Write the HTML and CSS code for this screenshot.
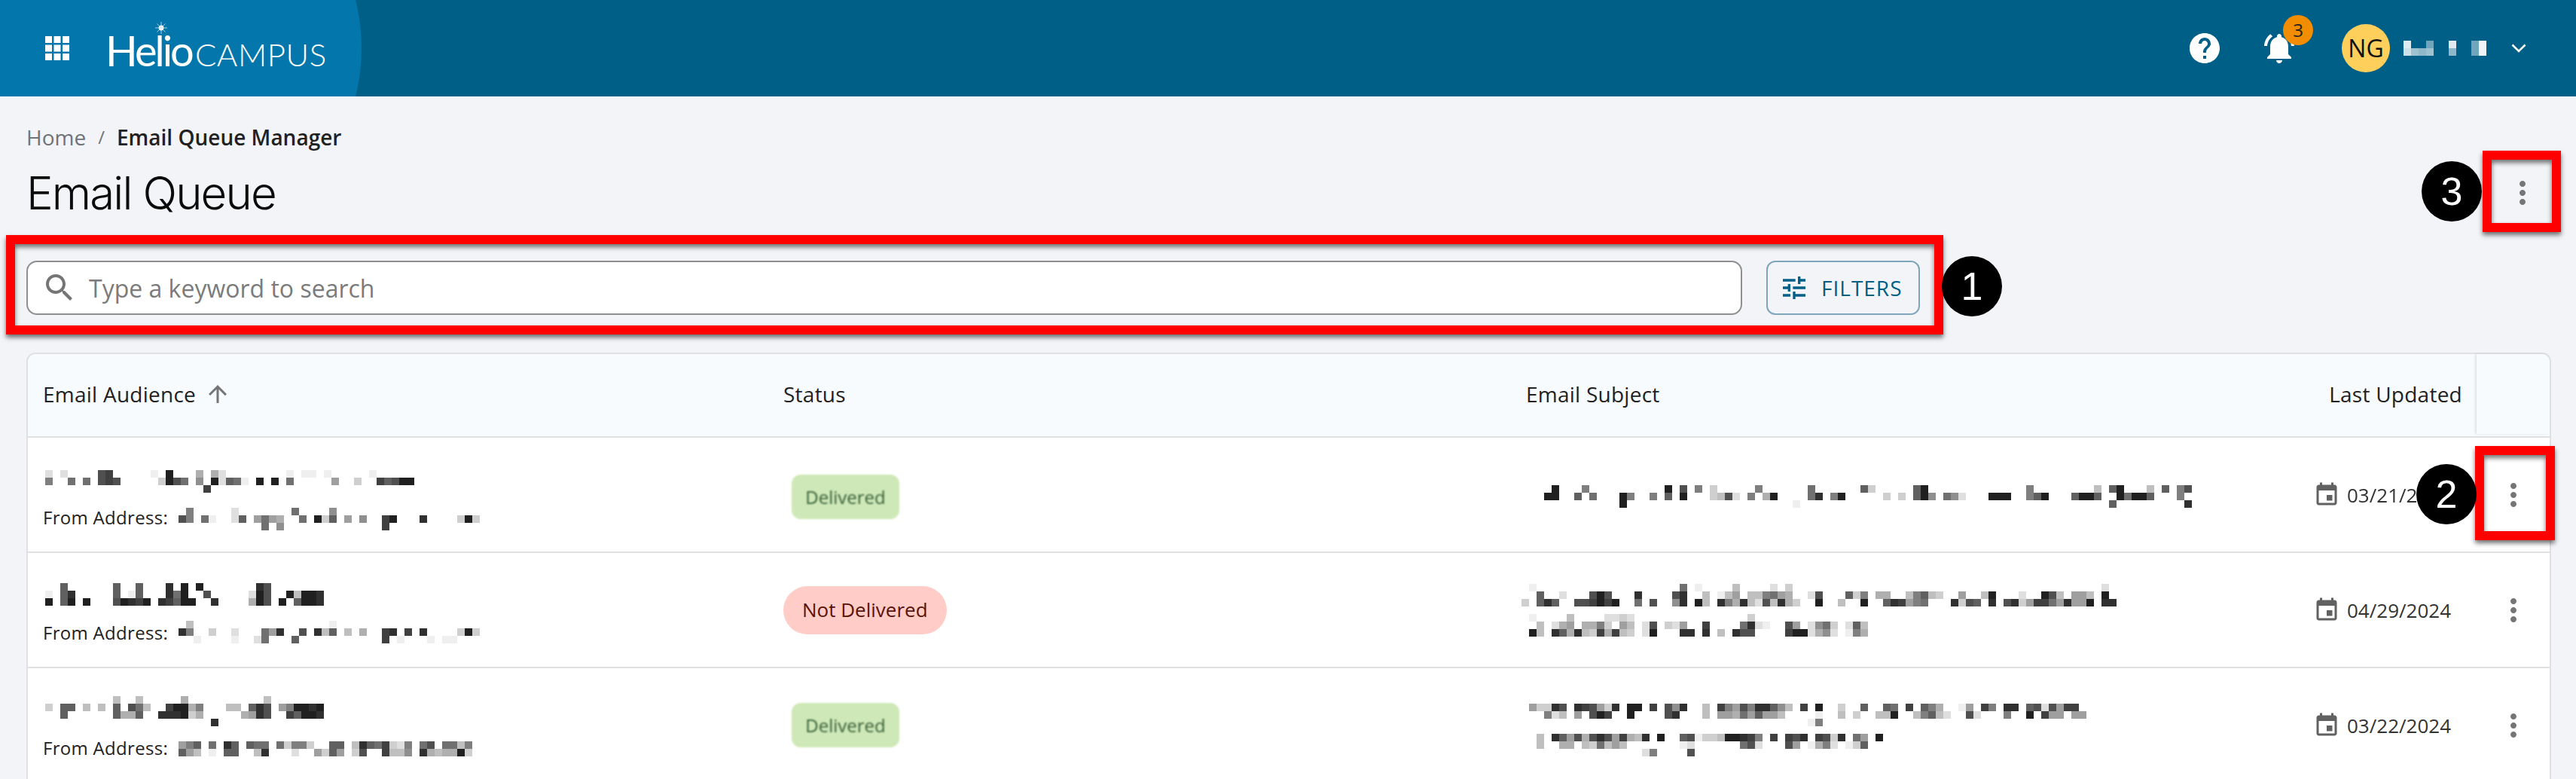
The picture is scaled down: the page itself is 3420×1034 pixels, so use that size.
FILE: index.html
```html
<!DOCTYPE html>
<html lang="en">
<head>
    <meta charset="UTF-8">
    <title>Email Queue</title>
    <link rel="stylesheet" href="styles.css">
</head>
<body>
    <header class="topbar">
        <div class="brand">
            <svg class="apps-icon" viewBox="0 0 32 32">
                <path fill="#fff" d="M0 0h9v9H0zM11.5 0h9v9h-9zM23 0h9v9h-9zM0 11.5h9v9H0zM11.5 11.5h9v9h-9zM23 11.5h9v9h-9zM0 23h9v9H0zM11.5 23h9v9h-9zM23 23h9v9h-9z"/>
            </svg>
            <div class="logo">
                <span class="logo-helio">Helio</span><span class="logo-campus">CAMPUS</span>
                <svg class="logo-spark" viewBox="0 0 16 16">
                    <circle cx="8" cy="8" r="3.4" fill="#fff"/>
                    <path stroke="#cfe6f2" stroke-width="0.8" d="M8 0v16M0 8h16M2.5 2.5l11 11M13.5 2.5l-11 11"/>
                </svg>
            </div>
        </div>
        <div class="topbar-actions">
            <svg class="icon-48 help-icon" viewBox="0 0 24 24"><path fill="#fff" d="M12 2C6.48 2 2 6.48 2 12s4.48 10 10 10 10-4.48 10-10S17.52 2 12 2zm1 17h-2v-2h2v2zm2.07-7.75l-.9.92C13.45 12.9 13 13.5 13 15h-2v-.5c0-1.1.45-2.1 1.17-2.83l1.24-1.26c.37-.36.59-.86.59-1.41 0-1.1-.9-2-2-2s-2 .9-2 2H8c0-2.21 1.79-4 4-4s4 1.79 4 4c0 .88-.36 1.68-.93 2.25z"/></svg>
            <div class="bell">
                <svg class="icon-48" viewBox="0 0 24 24"><path fill="#fff" d="M7.58 4.08L6.15 2.65C3.75 4.48 2.17 7.3 2.03 10.5h2c.15-2.65 1.51-4.97 3.55-6.42zm12.39 6.42h2c-.15-3.2-1.73-6.02-4.12-7.85l-1.42 1.43c2.02 1.45 3.39 3.77 3.54 6.42zM18 11c0-3.07-1.64-5.64-4.5-6.32V4c0-.83-.67-1.5-1.5-1.5s-1.5.67-1.5 1.5v.68C7.63 5.36 6 7.92 6 11v5l-2 2v1h16v-1l-2-2v-5zm-6 11c.14 0 .27-.01.4-.04.65-.14 1.18-.58 1.44-1.18.1-.24.15-.5.15-.78h-4c.01 1.1.9 2 2.01 2z"/></svg>
                <span class="bell-badge">3</span>
            </div>
            <div class="avatar">NG</div>
            <canvas class="pixels" data-ink="#fff" data-rows="0:2 3:9 6:2 9:9 10:1|0:3 1:6 2:7 3:6 6:7 9:9 10:1"></canvas>
            <svg class="chevron" viewBox="0 0 20 12"><path fill="none" stroke="#fff" stroke-width="2.6" d="M1.5 1.5L10 10l8.5-8.5"/></svg>
        </div>
    </header>

    <main class="page">
        <nav class="breadcrumb">
            <span class="crumb-home">Home</span>
            <span class="crumb-sep">/</span>
            <span class="crumb-current">Email Queue Manager</span>
        </nav>

        <div class="title-row">
            <h1>Email Queue</h1>
            <svg class="icon-48 kebab page-kebab" viewBox="0 0 24 24"><path d="M12 8c1.1 0 2-.9 2-2s-.9-2-2-2-2 .9-2 2 .9 2 2 2zm0 2c-1.100 0-2 .9-2 2s.9 2 2 2 2-.9 2-2-.9-2-2-2zm0 6c-1.100 0-2 .9-2 2s.9 2 2 2 2-.9 2-2-.9-2-2-2z"/></svg>
        </div>

        <div class="search-row">
            <label class="search-box">
                <svg class="search-icon" viewBox="0 0 24 24"><path d="M15.500 14h-.79l-.28-.27C15.410 12.590 16 11.110 16 9.500 16 5.910 13.090 3 9.500 3S3 5.910 3 9.500 5.910 16 9.500 16c1.610 0 3.090-.59 4.230-1.570l.27.28v.79l5 4.990L20.490 19l-4.990-5zm-6 0C7.010 14 5 11.990 5 9.500S7.010 5 9.500 5 14 7.010 14 9.500 11.990 14 9.500 14z"/></svg>
                <input type="text" placeholder="Type a keyword to search">
            </label>
            <button class="filters-btn">
                <svg class="tune-icon" viewBox="0 0 24 24"><path d="M3 17v2h6v-2H3zM3 5v2h10V5H3zm10 16v-2h8v-2h-8v-2h-2v6h2zM7 9v2H3v2h4v2h2V9H7zm14 4v-2H11v2h10zm-6-4h2V7h4V5h-4V3h-2v6z"/></svg>
                FILTERS
            </button>
        </div>

        <section class="queue-table">
            <div class="row head">
                <div class="cell cell-audience head-sort">
                    Email Audience
                    <svg class="sort-icon" viewBox="0 0 24 24"><path d="M4 12l1.410 1.410L11 7.830V20h2V7.830l5.580 5.590L20 12l-8-8-8 8z"/></svg>
                </div>
                <div class="cell cell-status">Status</div>
                <div class="cell cell-subject head-subject">Email Subject</div>
                <div class="cell cell-updated">Last Updated</div>
                <div class="cell cell-actions head-actions"></div>
            </div>

            <div class="row">
                <div class="cell cell-audience">
                    <div class="audience-name">
                        <canvas class="pixels nudge-10" data-rows="0:e 2:e 7:5 8:4 14:f 16:2 20:b 22:b 23:e 32:f 34:f 35:f 37:f 43:f|0:8 3:7 5:7 7:5 8:4 9:5 15:d 16:2 17:5 18:7 20:9 22:2 23:e 24:6 25:7 26:f 28:2 30:2 32:7 38:a 41:d 44:4 45:6 46:5 47:2 48:2|21:4"></canvas>
                    </div>
                    <div class="audience-from">
                        <span>From Address:</span>
                        <canvas class="pixels nudge-6" data-rows="1:8 7:e 15:7 20:9|0:5 1:8 3:7 4:f 7:e 8:6 10:a 11:7 12:a 13:b 16:7 18:2 19:d 20:6 22:a 24:9 27:4 28:2 32:3 37:d 38:2 39:d|11:7 13:9 27:4"></canvas>
                    </div>
                </div>
                <div class="cell cell-status"><span class="chip chip-ok chip-low">Delivered</span></div>
                <div class="cell cell-subject">
                    <canvas class="pixels nudge-5" data-rows="4:2 8:8 19:2 21:5 23:8 25:d 31:8 38:7 45:6 46:d 52:6 53:2 67:8 76:c 78:6 79:2 83:c 85:6 87:8 88:5|3:2 4:2 7:6 9:7 13:2 14:8 17:8 19:6 21:2 25:d 26:c 27:5 28:e 30:8 32:b 33:2 38:7 39:3 41:8 42:2 48:d 50:d 52:6 53:2 54:9 56:7 57:9 58:e 62:2 63:2 64:2 67:8 68:6 69:2 73:6 74:2 75:2 76:6 79:2 80:7 81:2 82:2 83:6 87:8|13:2 36:f 78:6 88:3"></canvas>
                </div>
                <div class="cell cell-updated cell-date">
                    <svg class="date-icon" viewBox="0 0 24 24"><path d="M17 12h-5v5h5v-5zM16 1v2H8V1H6v2H5c-1.110 0-1.990.9-1.990 2L3 19c0 1.100.89 2 2 2h14c1.100 0 2-.9 2-2V5c0-1.100-.9-2-2-2h-1V1h-2zm3 18H5V8h14v11z"/></svg>
                    <span class="date-text">03/21/2024</span>
                </div>
                <div class="cell cell-actions">
                    <svg class="icon-48 kebab" viewBox="0 0 24 24"><path d="M12 8c1.100 0 2-.9 2-2s-.9-2-2-2-2 .9-2 2 .9 2 2 2zm0 2c-1.100 0-2 .9-2 2s.9 2 2 2 2-.9 2-2-.9-2-2-2zm0 6c-1.100 0-2 .9-2 2s.9 2 2 2 2-.9 2-2-.9-2-2-2z"/></svg>
                </div>
            </div>

            <div class="row">
                <div class="cell cell-audience">
                    <div class="audience-name">
                        <canvas class="pixels nudge-7" data-rows="2:6 9:6 12:6 16:3 18:2 20:2 28:3 29:5|0:f 2:6 3:3 9:6 11:f 12:6 16:3 17:7 18:2 21:5 27:e 28:2 29:5 32:2 33:c 34:2 35:2 36:3|0:2 2:6 3:2 5:2 9:5 10:2 11:3 12:4 13:2 15:3 16:4 17:6 18:2 19:2 22:3 27:b 28:2 29:5 31:2 33:6 34:2 35:2 36:3"></canvas>
                    </div>
                    <div class="audience-from">
                        <span>From Address:</span>
                        <canvas class="pixels" data-rows="1:c 20:f|0:3 1:8 4:d 7:e 11:7 12:a 13:3 16:5 18:3 19:c 20:6 22:c 24:b 27:4 28:3 30:4 32:3 37:d 38:2 39:d|2:f 7:f 10:e 11:7 15:6 27:4 29:f 33:f 35:f 36:f"></canvas>
                    </div>
                </div>
                <div class="cell cell-status"><span class="chip chip-bad">Not Delivered</span></div>
                <div class="cell cell-subject">
                    <div class="subject-lines">
                        <canvas class="pixels" data-rows="1:f 21:7 23:f 28:c 33:e 35:d 77:e|2:6 5:e 9:5 10:2 11:5 15:3 20:5 21:3 24:c 26:f 27:c 28:a 30:c 31:c 32:8 33:7 34:a 35:b 38:e 39:5 43:6 44:d 45:8 47:b 48:b 51:c 52:8 53:6 54:c 55:d 58:a 61:c 62:2 66:e 69:2 70:5 71:c 73:a 74:a 75:c 77:2|0:d 2:6 3:3 4:6 7:5 8:5 9:4 10:2 11:4 12:2 15:7 17:5 20:9 21:3 23:2 24:c 26:3 27:8 28:b 29:3 30:c 31:e 32:5 33:c 34:3 35:b 36:d 39:2 42:c 45:2 48:6 49:3 50:4 51:a 52:8 53:7 57:3 58:d 59:5 60:6 62:3 64:5 65:3 66:d 67:a 68:4 69:4 70:7 71:a 72:3 73:a 74:a 75:2 77:3 78:3"></canvas>
                        <canvas class="pixels" data-rows="1:f 6:c 11:e 12:e 13:d 14:e 30:d|2:c 4:e 5:b 6:a 8:b 9:b 10:8 11:d 13:a 14:c 16:e 17:5 19:d 20:e 21:a 24:4 29:7 30:3 31:e 32:f 35:5 36:a 38:e 39:9 40:7 41:d 43:e 44:6 45:c|1:2 2:c 4:3 5:6 6:b 7:3 8:c 9:d 10:4 11:b 12:4 13:c 14:d 16:e 17:2 21:3 22:3 24:3 26:c 28:3 29:5 30:5 35:4 36:2 37:2 38:e 39:b 40:9 41:e 43:f 44:8 45:b"></canvas>
                    </div>
                </div>
                <div class="cell cell-updated cell-date">
                    <svg class="date-icon" viewBox="0 0 24 24"><path d="M17 12h-5v5h5v-5zM16 1v2H8V1H6v2H5c-1.110 0-1.990.9-1.990 2L3 19c0 1.100.89 2 2 2h14c1.100 0 2-.9 2-2V5c0-1.100-.9-2-2-2h-1V1h-2zm3 18H5V8h14v11z"/></svg>
                    <span class="date-text">04/29/2024</span>
                </div>
                <div class="cell cell-actions">
                    <svg class="icon-48 kebab" viewBox="0 0 24 24"><path d="M12 8c1.100 0 2-.9 2-2s-.9-2-2-2-2 .9-2 2 .9 2 2 2zm0 2c-1.100 0-2 .9-2 2s.9 2 2 2 2-.9 2-2-.9-2-2-2zm0 6c-1.100 0-2 .9-2 2s.9 2 2 2 2-.9 2-2-.9-2-2-2z"/></svg>
                </div>
            </div>

            <div class="row">
                <div class="cell cell-audience">
                    <div class="audience-name">
                        <canvas class="pixels nudge-4" data-rows="9:c 12:c 18:b 29:c|0:d 2:6 3:6 5:c 7:c 9:6 11:5 12:7 13:c 16:4 17:2 18:2 19:b 20:8 24:c 25:c 27:6 28:3 29:5 31:a 32:8 33:2 34:2 35:3 36:2|2:6 9:6 10:b 11:b 12:6 15:3 16:3 17:3 18:2 19:d 20:b 26:b 27:a 28:3 29:5 32:4 33:6 34:2 35:2 36:3|22:3"></canvas>
                    </div>
                    <div class="audience-from">
                        <span>From Address:</span>
                        <canvas class="pixels nudge-4" data-rows="0:a 1:8 2:6 4:7 6:3 7:6 9:6 10:7 11:7 13:7 14:d 15:8 16:8 17:d 20:6 21:6 23:c 24:3 25:6 26:7 27:4 28:d 29:e 30:8 32:7 33:5 35:7 36:7 37:c 38:8|0:6 1:a 2:c 4:f 6:6 7:6 10:c 11:3 15:e 18:a 19:d 20:6 21:a 23:d 24:5 27:4 28:c 29:c 30:9 32:3 33:b 34:c 35:b 36:b 37:2 38:d"></canvas>
                    </div>
                </div>
                <div class="cell cell-status"><span class="chip chip-ok">Delivered</span></div>
                <div class="cell cell-subject">
                    <div class="subject-lines nudge-12">
                        <canvas class="pixels" data-rows="1:a 2:d 3:d 4:3 5:5 7:3 8:4 9:5 10:a 11:d 12:3 14:2 15:2 17:4 19:5 20:9 21:3 24:c 26:4 27:8 28:a 29:5 30:8 31:3 32:3 33:6 34:9 35:c 37:4 39:2 42:d 45:6 48:6 49:7 51:4 53:6 54:8 55:b 58:f 59:a 61:4 62:8 64:3 65:3 67:6 68:5 69:e 70:5 71:a 72:4 73:4|3:8 4:e 5:c 7:a 9:5 10:2 11:4 14:2 19:5 20:3 24:c 26:a 27:a 28:b 29:7 30:a 31:6 32:a 33:a 34:c 39:f 42:c 44:d 47:c 48:c 49:2 52:c 53:8 54:6 55:c 56:e 59:5 60:e 64:8 67:2 69:4 70:a 71:a 73:a 74:a|38:f 39:8"></canvas>
                        <canvas class="pixels" data-rows="2:c 4:3 5:6 6:a 7:5 8:b 9:5 10:3 11:5 12:a 13:4 14:b 15:c 16:3 18:2 21:6 22:5 23:f 24:d 25:d 26:c 27:2 28:2 29:3 30:4 31:8 33:4 35:4 36:5 37:3 39:4 40:5 41:d 42:3 44:7 45:a 47:2|2:c 5:b 6:b 8:c 9:d 10:7 11:c 12:a 13:c 21:f 22:e 29:7 30:5 31:e 35:5 36:a 38:f 39:b 40:8 41:e 43:f 44:d 45:6|16:e 17:8 22:5"></canvas>
                    </div>
                </div>
                <div class="cell cell-updated cell-date">
                    <svg class="date-icon" viewBox="0 0 24 24"><path d="M17 12h-5v5h5v-5zM16 1v2H8V1H6v2H5c-1.110 0-1.990.9-1.990 2L3 19c0 1.100.89 2 2 2h14c1.100 0 2-.9 2-2V5c0-1.100-.9-2-2-2h-1V1h-2zm3 18H5V8h14v11z"/></svg>
                    <span class="date-text">03/22/2024</span>
                </div>
                <div class="cell cell-actions">
                    <svg class="icon-48 kebab" viewBox="0 0 24 24"><path d="M12 8c1.100 0 2-.9 2-2s-.9-2-2-2-2 .9-2 2 .9 2 2 2zm0 2c-1.100 0-2 .9-2 2s.9 2 2 2 2-.9 2-2-.9-2-2-2zm0 6c-1.100 0-2 .9-2 2s.9 2 2 2 2-.9 2-2-.9-2-2-2z"/></svg>
                </div>
            </div>
        </section>
    </main>

    <!-- callouts drawn over the screenshot -->
    <div class="callout-box box-search"></div>
    <div class="callout-box box-row"></div>
    <div class="callout-box box-page"></div>
    <div class="callout-num num-search">1</div>
    <div class="callout-num num-row">2</div>
    <div class="callout-num num-page">3</div>

    <script src="script.js"></script>
</body>
</html>
```

FILE: styles.css
```css
* {
    box-sizing: border-box;
}

html, body {
    margin: 0;
    height: 100%;
}

body {
    position: relative;
    overflow: hidden;
    background-color: #f2f4f8;
    color: #212121;
    font-family: "Open Sans", sans-serif;
    font-size: 28px;
}

.icon-48 {
    display: block;
    flex: none;
    width: 48px;
    height: 48px;
}

.kebab {
    fill: #757575;
}

/* Top bar */
.topbar {
    display: flex;
    align-items: center;
    justify-content: space-between;
    height: 128px;
    background-color: #005f86;
}

.brand {
    display: flex;
    align-items: center;
    width: 480px;
    height: 100%;
    padding-left: 60px;
    background-color: #0377ab;
    clip-path: circle(260px at 220px 64px);
}

.apps-icon {
    flex: none;
    width: 32px;
    height: 32px;
}

.logo {
    position: relative;
    display: flex;
    align-items: baseline;
    margin-left: 48px;
    margin-top: 5px;
    color: #fff;
    font-family: Lato, sans-serif;
}

.logo-helio {
    font-size: 56px;
    letter-spacing: -3px;
}

.logo-campus {
    margin-left: 4px;
    font-size: 42px;
    font-weight: 300;
    letter-spacing: 0.6px;
}

.logo-spark {
    position: absolute;
    top: -4px;
    left: 66px;
    width: 16px;
    height: 16px;
}

.topbar-actions {
    display: flex;
    align-items: center;
    padding-right: 66px;
}

.bell {
    position: relative;
    margin-left: 51px;
}

.bell-badge {
    position: absolute;
    top: -20px;
    left: 29px;
    width: 40px;
    height: 40px;
    border-radius: 50%;
    background-color: #f28c00;
    color: #212121;
    font-size: 24px;
    line-height: 40px;
    text-align: center;
}

.avatar {
    flex: none;
    width: 64px;
    height: 64px;
    margin-left: 59px;
    border-radius: 50%;
    background-color: #ffcf5c;
    color: #111;
    font-size: 32px;
    line-height: 64px;
    text-align: center;
}

.topbar-actions .pixels {
    margin-left: 18px;
}

.chevron {
    flex: none;
    width: 20px;
    height: 12px;
    margin-left: 33px;
}

/* Page head */
.page {
    padding: 34px 33px 0 35px;
}

.breadcrumb {
    display: flex;
    align-items: center;
    height: 40px;
    line-height: 40px;
}

.crumb-home {
    color: #6f7378;
}

.crumb-sep {
    margin: 0 16px 0 16px;
    color: #6f7378;
    font-size: 24px;
}

.crumb-current {
    font-weight: 600;
}

.title-row {
    display: flex;
    align-items: center;
    justify-content: space-between;
    height: 80px;
    margin-top: 14px;
}

h1 {
    margin: 0;
    color: #0b0b0b;
    font-family: Inter, sans-serif;
    font-size: 60px;
    font-weight: 300;
    letter-spacing: -1.9px;
}

.page-kebab {
    margin-right: 14px;
}

/* Search */
.search-row {
    display: flex;
    gap: 32px;
    height: 72px;
    margin-top: 50px;
    padding-right: 838px;
}

.search-box {
    display: flex;
    flex: 1;
    align-items: center;
    border: 2px solid #8f8f8f;
    border-radius: 14px;
    background-color: #fff;
}

.search-icon {
    flex: none;
    width: 48px;
    height: 48px;
    margin-left: 18px;
    fill: #757575;
}

.search-box input {
    flex: 1;
    margin-left: 13px;
    border: none;
    outline: none;
    background: transparent;
    color: #212121;
    font-family: "Open Sans", sans-serif;
    font-size: 32px;
}

.search-box input::placeholder {
    color: #7b7b7b;
    opacity: 1;
}

.filters-btn {
    display: flex;
    flex: none;
    align-items: center;
    width: 204px;
    padding: 0 0 0 15px;
    border: 2px solid #7fa5bb;
    border-radius: 12px;
    background-color: #f2f4f8;
    color: #005f86;
    font-family: "Open Sans", sans-serif;
    font-size: 28px;
    letter-spacing: 1px;
}

.tune-icon {
    flex: none;
    width: 40px;
    height: 40px;
    margin-right: 16px;
    fill: #005f86;
}

/* Table */
.queue-table {
    margin-top: 50px;
    border: 2px solid #e0e0e0;
    border-bottom: none;
    border-radius: 12px 12px 0 0;
    background-color: #fff;
}

.row {
    display: grid;
    grid-template-columns: 981px 986px 886px 1fr 97px;
    height: 153px;
    border-bottom: 2px solid #e0e0e0;
}

.row.head {
    height: 111px;
    padding-bottom: 3px;
    border-radius: 12px 12px 0 0;
    background-color: #f8fbfd;
    letter-spacing: 0.25px;
}

.cell {
    display: flex;
    align-items: center;
    min-width: 0;
}

.cell-audience {
    padding-left: 20px;
}

.row:not(.head) .cell-audience {
    flex-direction: column;
    align-items: flex-start;
    padding-top: 33px;
}

.head-sort {
    gap: 11px;
}

.sort-icon {
    width: 36px;
    height: 36px;
    fill: #757575;
}

.audience-name {
    height: 40px;
    margin-left: 3px;
}

.audience-from {
    display: flex;
    align-items: center;
    height: 34px;
    margin-top: 15px;
    font-size: 24px;
    letter-spacing: 0.3px;
}

.audience-from .pixels {
    flex: none;
    margin-left: 14px;
}

.cell-status {
    padding-left: 22px;
}

.chip {
    display: inline-block;
    font-size: 26px;
    white-space: nowrap;
}

.chip-ok {
    width: 143px;
    height: 59px;
    margin-left: 11px;
    border-radius: 12px;
    background-color: #cfe8b7;
    color: #36603a;
    font-size: 24px;
    line-height: 59px;
    text-align: center;
    filter: blur(0.9px);
}

.chip-low {
    margin-top: 6px;
}

.chip-bad {
    height: 64px;
    padding: 0 25px;
    border-radius: 32px;
    background-color: #ffccc7;
    color: #5a1208;
    line-height: 62px;
}

.cell-subject {
    padding-left: 16px;
}

.head-subject {
    padding-left: 22px;
}

.subject-lines {
    display: flex;
    flex-direction: column;
    align-items: flex-start;
    gap: 10px;
}

.cell-updated {
    justify-content: flex-end;
    padding-right: 19px;
}

.cell-date {
    justify-content: flex-start;
    padding: 0 0 0 181px;
    color: #333;
    font-size: 26px;
}

.date-icon {
    flex: none;
    width: 36px;
    height: 36px;
    margin-right: 9px;
    fill: #616161;
}

.date-text {
    white-space: nowrap;
}

.cell-actions {
    justify-content: center;
}

.head-actions {
    box-shadow: -2px 0 3px rgba(0, 0, 0, 0.1);
}

/* redacted text blocks */
.pixels {
    display: block;
    flex: none;
}

.nudge-4 { margin-top: 4px; }
.nudge-5 { margin-top: 5px; }
.nudge-6 { margin-top: 6px; }
.nudge-7 { margin-top: 7px; }
.nudge-10 { margin-top: 10px; }
.nudge-12 { margin-top: 12px; }

/* Callouts */
.callout-box {
    position: absolute;
    border: 12px solid #f00;
    box-shadow: 0 4px 6px rgba(0, 0, 0, 0.55), inset 0 4px 6px rgba(0, 0, 0, 0.55);
}

.box-search {
    top: 312px;
    left: 8px;
    width: 2572px;
    height: 132px;
}

.box-row {
    top: 592px;
    left: 3286px;
    width: 106px;
    height: 125px;
}

.box-page {
    top: 200px;
    left: 3296px;
    width: 104px;
    height: 108px;
}

.callout-num {
    position: absolute;
    width: 80px;
    height: 80px;
    border-radius: 50%;
    background-color: #000;
    color: #fff;
    font-family: "Liberation Sans", sans-serif;
    font-size: 52px;
    line-height: 80px;
    text-align: center;
}

.num-search {
    top: 340px;
    left: 2578px;
}

.num-row {
    top: 616px;
    left: 3208px;
}

.num-page {
    top: 214px;
    left: 3215px;
}
```

FILE: script.js
```js
// each canvas holds text that was pixelated out of the screenshot
// data-rows: rows split by |, cells as column:shade (hex, 0 = full ink, f = faint)
const CELL = 10;

document.querySelectorAll('canvas.pixels').forEach(function (canvas) {
    const rows = canvas.dataset.rows.split('|').map(function (row) {
        return row.split(' ').map(function (cell) {
            const parts = cell.split(':');
            return { col: Number(parts[0]), shade: parseInt(parts[1], 16) };
        });
    });

    const lastCol = Math.max(...rows.flat().map(function (c) { return c.col; }));
    canvas.width = (lastCol + 1) * CELL;
    canvas.height = rows.length * CELL;

    const ctx = canvas.getContext('2d');
    ctx.fillStyle = canvas.dataset.ink || '#000';
    rows.forEach(function (row, y) {
        row.forEach(function (c) {
            ctx.globalAlpha = (16 - c.shade) / 16;
            ctx.fillRect(c.col * CELL, y * CELL, CELL, CELL);
        });
    });
});
```
